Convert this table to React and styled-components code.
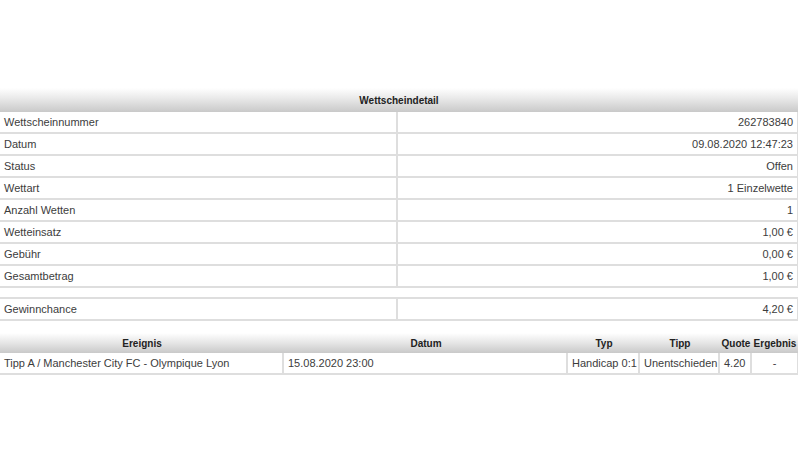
import React from "react";
import styled, { createGlobalStyle } from "styled-components";

const GlobalStyle = createGlobalStyle`
  html, body {
    margin: 0;
    padding: 0;
    background: #fff;
  }
  body {
    font-family: "Liberation Sans", Arial, sans-serif;
    font-size: 11px;
    color: #3c3c3c;
  }
`;

const Page = styled.div`
  width: 798px;
  padding-top: 88px;
`;

const Table = styled.table`
  width: 100%;
  border-collapse: separate;
  border-spacing: 0;
  table-layout: fixed;
  margin-bottom: ${(p) => p.$gap || 0}px;
`;

const HeadCell = styled.th`
  height: ${(p) => p.$h || 20}px;
  padding: 0;
  font-size: 10px;
  font-weight: bold;
  color: #222;
  text-align: center;
  background: linear-gradient(to bottom, #ffffff 0%, #e8e8e8 45%, #c9c9c9 100%);
  white-space: nowrap;
  overflow: hidden;
`;

const Cell = styled.td`
  height: 20px;
  padding: 0 4px;
  border-bottom: 2px solid #dedede;
  border-right: ${(p) => (p.$last ? "1px" : "2px")} solid #dedede;
  text-align: ${(p) => p.$align || "left"};
  white-space: nowrap;
  overflow: hidden;
  color: #3c3c3c;
  line-height: 20px;
`;

const SingleCell = styled(Cell)`
  border-top: 2px solid #dedede;
`;

const detailRows = [
  ["Wettscheinnummer", "262783840"],
  ["Datum", "09.08.2020 12:47:23"],
  ["Status", "Offen"],
  ["Wettart", "1 Einzelwette"],
  ["Anzahl Wetten", "1"],
  ["Wetteinsatz", "1,00 €"],
  ["Gebühr", "0,00 €"],
  ["Gesamtbetrag", "1,00 €"],
];

export default function App() {
  return (
    <Page>
      <GlobalStyle />
      <Table $gap={9}>
        <colgroup>
          <col style={{ width: 398 }} />
          <col />
        </colgroup>
        <thead>
          <tr>
            <HeadCell colSpan={2} $h={24}>
              Wettscheindetail
            </HeadCell>
          </tr>
        </thead>
        <tbody>
          {detailRows.map(([label, value]) => (
            <tr key={label}>
              <Cell>{label}</Cell>
              <Cell $align="right" $last>
                {value}
              </Cell>
            </tr>
          ))}
        </tbody>
      </Table>

      <Table $gap={12}>
        <colgroup>
          <col style={{ width: 398 }} />
          <col />
        </colgroup>
        <tbody>
          <tr>
            <SingleCell>Gewinnchance</SingleCell>
            <SingleCell $align="right" $last>
              4,20 €
            </SingleCell>
          </tr>
        </tbody>
      </Table>

      <Table>
        <colgroup>
          <col style={{ width: 284 }} />
          <col style={{ width: 284 }} />
          <col style={{ width: 72 }} />
          <col style={{ width: 80 }} />
          <col style={{ width: 32 }} />
          <col />
        </colgroup>
        <thead>
          <tr>
            <HeadCell>Ereignis</HeadCell>
            <HeadCell>Datum</HeadCell>
            <HeadCell>Typ</HeadCell>
            <HeadCell>Tipp</HeadCell>
            <HeadCell>Quote</HeadCell>
            <HeadCell>Ergebnis</HeadCell>
          </tr>
        </thead>
        <tbody>
          <tr>
            <Cell>Tipp A / Manchester City FC - Olympique Lyon</Cell>
            <Cell>15.08.2020 23:00</Cell>
            <Cell>Handicap 0:1</Cell>
            <Cell>Unentschieden</Cell>
            <Cell>4.20</Cell>
            <Cell $align="center" $last>
              -
            </Cell>
          </tr>
        </tbody>
      </Table>
    </Page>
  );
}
